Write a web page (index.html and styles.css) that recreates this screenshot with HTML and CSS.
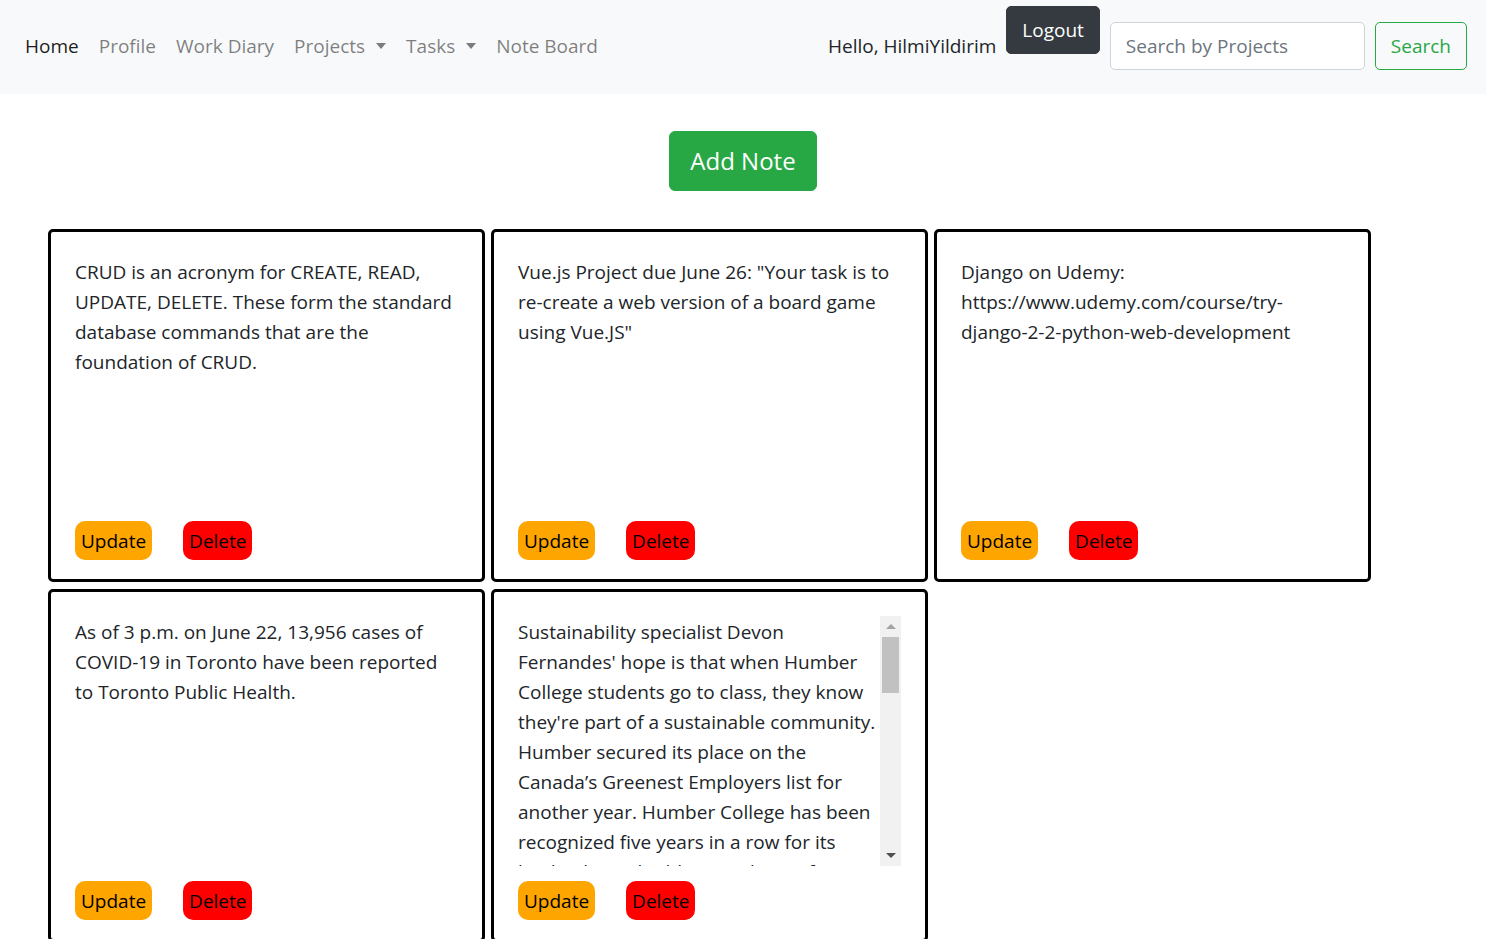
FILE: index.html
```html
<!DOCTYPE html>
<html lang="en">
<head>
<meta charset="utf-8">
<title>Note Board</title>
<link rel="stylesheet" href="styles.css">
</head>
<body>
<nav class="navbar">
  <ul class="nav-links">
    <li><a class="nav-link active" href="#">Home</a></li>
    <li><a class="nav-link" href="#">Profile</a></li>
    <li><a class="nav-link" href="#">Work Diary</a></li>
    <li><a class="nav-link dropdown-toggle" href="#">Projects</a></li>
    <li><a class="nav-link dropdown-toggle" href="#">Tasks</a></li>
    <li><a class="nav-link" href="#">Note Board</a></li>
  </ul>
  <div class="nav-right">
    <span class="hello">Hello, HilmiYildirim</span>
    <button class="btn btn-dark logout">Logout</button>
    <form class="search-form">
      <input class="search-input" type="text" placeholder="Search by Projects">
      <button class="btn btn-outline-success" type="button">Search</button>
    </form>
  </div>
</nav>

<main class="main">
  <div class="add-wrap">
    <button class="btn btn-success btn-lg">Add Note</button>
  </div>
  <div class="notes">
    <div class="note">
      <div class="note-body"><div class="note-text">CRUD is an acronym for CREATE, READ, UPDATE, DELETE. These form the standard database commands that are the foundation of CRUD.</div></div>
      <div class="note-actions"><button class="nbtn update">Update</button><button class="nbtn delete">Delete</button></div>
    </div>
    <div class="note">
      <div class="note-body"><div class="note-text">Vue.js Project due June 26: "Your task is to re-create a web version of a board game using Vue.JS"</div></div>
      <div class="note-actions"><button class="nbtn update">Update</button><button class="nbtn delete">Delete</button></div>
    </div>
    <div class="note">
      <div class="note-body"><div class="note-text">Django on Udemy: https://www.udemy.com/course/try-django-2-2-python-web-development</div></div>
      <div class="note-actions"><button class="nbtn update">Update</button><button class="nbtn delete">Delete</button></div>
    </div>
    <div class="note">
      <div class="note-body"><div class="note-text">As of 3 p.m. on June 22, 13,956 cases of COVID-19 in Toronto have been reported to Toronto Public Health.</div></div>
      <div class="note-actions"><button class="nbtn update">Update</button><button class="nbtn delete">Delete</button></div>
    </div>
    <div class="note">
      <div class="note-body">
        <div class="note-text">Sustainability specialist Devon Fernandes' hope is that when Humber College students go to class, they know they're part of a sustainable community. Humber secured its place on the Canada’s Greenest Employers list for another year. Humber College has been recognized five years in a row for its leadership in building a culture of environmental awareness and sustainability.</div>
        <div class="scrollbar" aria-hidden="true">
          <span class="sb-up"></span>
          <span class="sb-thumb"></span>
          <span class="sb-space"></span>
          <span class="sb-down"></span>
        </div>
      </div>
      <div class="note-actions"><button class="nbtn update">Update</button><button class="nbtn delete">Delete</button></div>
    </div>
  </div>
</main>
</body>
</html>
```

FILE: styles.css
```css
* { box-sizing: border-box; }

html, body {
  margin: 0;
  padding: 0;
}

body {
  font-family: "Open Sans", "Noto Sans", sans-serif;
  font-size: 19px;
  line-height: 30px;
  color: #212529;
  background: #fff;
}

.navbar {
  display: flex;
  align-items: center;
  justify-content: space-between;
  height: 94px;
  padding: 0 19px 2px 15px;
  background: #f8f9fa;
}

.nav-links {
  display: flex;
  list-style: none;
  margin: 0;
  padding: 0;
}

.nav-link {
  display: block;
  padding: 10px 10px;
  color: rgba(0, 0, 0, 0.5);
  text-decoration: none;
}

.nav-link.active {
  color: rgba(0, 0, 0, 0.9);
}

.dropdown-toggle::after {
  content: "";
  display: inline-block;
  margin-left: 11px;
  vertical-align: 4px;
  border-top: 6px solid;
  border-right: 5.5px solid transparent;
  border-left: 5.5px solid transparent;
  border-bottom: 0;
}

.nav-right {
  display: flex;
  align-items: center;
  gap: 10px;
  height: 100%;
}

.hello {
  color: #212529;
}

.btn {
  font-family: inherit;
  font-size: 19px;
  line-height: 30px;
  padding: 8px 15px;
  border: 1px solid transparent;
  border-radius: 5px;
  cursor: pointer;
}

.btn-dark {
  background: #343a40;
  border-color: #343a40;
  color: #fff;
}

.logout {
  align-self: flex-start;
  margin-top: 6px;
}

.search-form {
  display: flex;
  align-items: center;
  gap: 10px;
  margin: 0;
}

.search-input {
  width: 255px;
  height: 48px;
  padding: 8px 15px;
  font-family: inherit;
  font-size: 19px;
  color: #495057;
  background: #fff;
  border: 1px solid #ced4da;
  border-radius: 5px;
}

.search-input::placeholder {
  color: #6c757d;
}

.btn-outline-success {
  color: #28a745;
  border-color: #28a745;
  background: transparent;
}

.main {
  padding: 37px 0 0 48px;
}

.add-wrap {
  display: flex;
  justify-content: center;
  padding-right: 48px;
}

.btn-success {
  background: #28a745;
  border-color: #28a745;
  color: #fff;
}

.btn-lg {
  font-size: 24px;
  line-height: 38px;
  padding: 10px 20px;
  border-radius: 6px;
}

.notes {
  display: flex;
  flex-wrap: wrap;
  column-gap: 6px;
  row-gap: 7px;
  width: 1323px;
  margin-top: 38px;
}

.note {
  width: 437px;
  height: 353px;
  border: 3px solid #000;
  border-radius: 5px;
  padding: 24px 24px 19px;
  display: flex;
  flex-direction: column;
}

.note-body {
  display: flex;
  height: 250px;
}

.note-text {
  flex: 1;
  min-width: 0;
  overflow: hidden;
  padding-top: 1px;
}

.scrollbar {
  width: 21px;
  flex: none;
  display: flex;
  flex-direction: column;
  align-items: center;
  background: #f1f1f1;
}

.sb-up,
.sb-down {
  flex: none;
  height: 21px;
  width: 21px;
  display: flex;
  align-items: center;
  justify-content: center;
}

.sb-up::before {
  content: "";
  border-bottom: 5px solid #a3a3a3;
  border-left: 5px solid transparent;
  border-right: 5px solid transparent;
}

.sb-down::before {
  content: "";
  border-top: 5px solid #505050;
  border-left: 5px solid transparent;
  border-right: 5px solid transparent;
}

.sb-thumb {
  flex: none;
  width: 17px;
  height: 56px;
  background: #c1c1c1;
}

.sb-space {
  flex: 1;
}

.note-actions {
  display: flex;
  gap: 31px;
  margin-top: 15px;
}

.nbtn {
  font-family: inherit;
  font-size: 19px;
  line-height: 30px;
  height: 39px;
  padding: 0 6px;
  border: 0;
  border-radius: 10px;
  color: #000;
}

.update {
  background: #ffa500;
}

.delete {
  background: #ff0000;
}
```
